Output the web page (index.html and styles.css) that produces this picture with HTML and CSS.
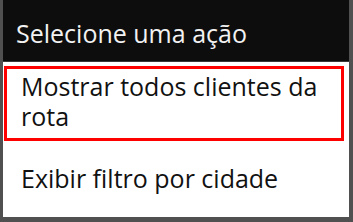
FILE: index.html
```html
<!DOCTYPE html>
<html>
<head>
    <meta charset="utf-8" />
    <title>Selecione uma ação</title>
    <link rel="stylesheet" href="styles.css">
</head>
<body>
    <div class="dialog">
        <div class="dialog-title">Selecione uma ação</div>
        <div class="dialog-list">
            <div class="dialog-item dialog-item-selected">Mostrar todos clientes da rota</div>
            <div class="dialog-item">Exibir filtro por cidade</div>
        </div>
    </div>
</body>
</html>
```

FILE: styles.css
```css
html, body{
    margin:0;
    padding:0;
}
body{
    width:353px;
    height:222px;
    background:#505050;
    font-family:"Open Sans", "Noto Sans", sans-serif;
    overflow:hidden;
}
.dialog{
    box-sizing:border-box;
    height:217px;
    margin:0 4px 0 3px;
    display:flex;
    flex-direction:column;
    background:#fff;
}
.dialog-title{
    height:62px;
    box-sizing:border-box;
    padding:19px 0 0 13px;
    background:#0d0d0d;
    border-bottom:1px solid #3a3a3a;
    color:#f2f2f2;
    font-size:25px;
    line-height:28px;
}
.dialog-list{
    padding:4px 0 0 0;
}
.dialog-item{
    box-sizing:border-box;
    padding:0 0 0 18px;
    color:#111;
    font-size:25px;
    line-height:30px;
}
.dialog-item-selected{
    height:75px;
    margin:0 5px 0 1px;
    padding:2px 0 0 14px;
    border:3px solid #f00;
}
.dialog-item + .dialog-item{
    padding-top:22px;
}
```
